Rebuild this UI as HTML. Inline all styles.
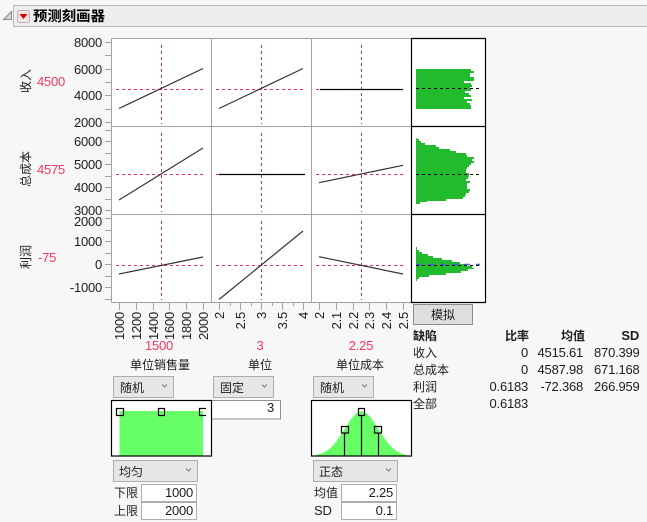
<!DOCTYPE html>
<html><head><meta charset="utf-8"><style>
html,body{margin:0;padding:0;background:#f7f7f7;width:647px;height:522px;overflow:hidden}
svg{display:block}
text{font-family:"Liberation Sans","Noto Sans CJK SC",sans-serif;font-size:13px;fill:#1c1c1c;letter-spacing:-.22px}
.c{font-size:12px;letter-spacing:0}
.r{fill:#f5375a}
.m{text-anchor:middle}
.e{text-anchor:end}
.b{font-weight:bold}
.sel{fill:#e6e6e6;stroke:#adadad;stroke-width:1}
.inp{fill:#fff;stroke:#adadad;stroke-width:1}
.red{stroke:#e0304f;stroke-width:1;stroke-dasharray:3 3;fill:none}
.lin{stroke:#333;stroke-width:1.2;fill:none}
.blk{stroke:#000;stroke-width:1.2;fill:none}
.dot{stroke:#000;stroke-width:1;stroke-dasharray:3 3;fill:none}
.chev{stroke:#777;stroke-width:1;fill:none}
.g{stroke:#a3a3a3;stroke-width:1;fill:none}
.hd{fill:none;stroke:#000;stroke-width:1.2}
</style></head><body>
<svg width="647" height="522" viewBox="0 0 647 522" xmlns="http://www.w3.org/2000/svg">
<rect width="647" height="522" fill="#f7f7f7"/>
<!-- header -->
<rect x="13.5" y="5.5" width="640" height="21" fill="#eeeeee" stroke="#b5b5b5"/>
<path d="M3.5 19.5 L11.5 11.5 V19.5 Z" fill="#d8d8d8" stroke="#8a8a8a"/>
<rect x="17.5" y="10.5" width="12" height="12" rx="2" fill="#f0e4e4" stroke="#c0b0b0"/>
<path d="M19.5 14 H27.5 L23.5 19 Z" fill="#d80000"/>
<text x="33" y="21" class="b" style="font-size:14.4px;letter-spacing:0;fill:#000">预测刻画器</text>

<!-- panels -->
<rect x="111.5" y="38.5" width="300" height="264" fill="#fff"/>
<rect x="411.5" y="38.5" width="74" height="264" fill="#fff"/>
<path class="g" d="M111.5 38.5 H411.5 M111.5 126.5 H411.5 M111.5 214.5 H411.5 M111.5 302.5 H411.5 M111.5 38.5 V302.5 M211.5 38.5 V302.5 M311.5 38.5 V302.5"/>

<!-- y ticks -->
<path class="g" d="M105 42.5H111M105 55.5H111M105 69.5H111M105 82.5H111M105 95.5H111M105 109.5H111M105 122.5H111
M105 130.5H111M105 141.5H111M105 153.5H111M105 164.5H111M105 176.5H111M105 187.5H111M105 199.5H111M105 210.5H111
M105 218.5H111M105 230.5H111M105 241.5H111M105 253.5H111M105 264.5H111M105 276.5H111M105 287.5H111M105 299.5H111"/>
<!-- x ticks -->
<path class="g" d="M119.5 302V310M136.5 302V310M153.5 302V310M169.5 302V310M186.5 302V310M203.5 302V310
M219.5 302V310M230.5 302V306M240.5 302V310M251.5 302V306M261.5 302V310M272.5 302V306M282.5 302V310M293.5 302V306M303.5 302V310
M319.5 302V310M336.5 302V310M353.5 302V310M369.5 302V310M386.5 302V310M403.5 302V310"/>

<!-- y labels -->
<g class="e">
<text x="102" y="47" class="e">8000</text><text x="102" y="74" class="e">6000</text><text x="102" y="100" class="e">4000</text><text x="102" y="127" class="e">2000</text>
<text x="102" y="146" class="e">6000</text><text x="102" y="169" class="e">5000</text><text x="102" y="192" class="e">4000</text><text x="102" y="215" class="e">3000</text>
<text x="102" y="226" class="e">2000</text><text x="102" y="246" class="e">1000</text><text x="102" y="269" class="e">0</text><text x="102" y="292" class="e">-1000</text>
</g>

<!-- side labels -->
<text class="c m" transform="translate(30,81) rotate(-90)">收入</text>
<text class="c m" transform="translate(30,169) rotate(-90)">总成本</text>
<text class="c m" transform="translate(30,257) rotate(-90)">利润</text>
<text x="37" y="86" class="r">4500</text>
<text x="37" y="174" class="r">4575</text>
<text x="38" y="262" class="r">-75</text>

<!-- crosshairs -->
<path class="red" d="M161.5 45V124M261.5 45V124M361.5 45V124M161.5 133V212M261.5 133V212M361.5 133V212M161.5 221V300M261.5 221V300M361.5 221V300"/>
<path class="red" d="M116 89.5H206M216 89.5H306M316 89.5H406M116 174.5H206M216 174.5H306M316 174.5H406M116 265.5H206M216 265.5H306M316 265.5H406"/>

<!-- profile lines -->
<path class="lin" d="M119 108.5L203 68.5M219 108.5L303 68.5M119 200L203 148M319 182.7L403 165.3M119 274L203 257M219 299.5L303 231M319 256.7L403 274"/>
<path class="blk" d="M320 89.5H403M219 174.5H305"/>

<!-- histograms -->
<g fill="#22bb2e" shape-rendering="crispEdges">
<path d="M416 69H471V71H474V73H470V77H474V81H464V83H471V85H472V87H470V89H471V91H465V93H469V95H471V97H464V99H472V101H467V103H470V105H471V109H416Z"/>
<path d="M416 138H417V139H419V141H421V143H425V145H436V147H439V149H450V151H456V153H466V155H467V157H474V159H472V161H474V163H471V165H469V167H467V169H466V173H469V177H468V179H466V181H470V183H467V189H470V191H469V193H466V195H465V197H463V199H446V201H427V202H420V204H416Z"/>
<path d="M416 247H417V250H419V252H422V254H428V256H433V258H442V260H452V262H460V264H465V266H472V268H474V269H468V271H461V273H446V275H429V277H419V279H417V281H416Z"/>
</g>
<path d="M416 264.5H480" stroke="#3a66d8" stroke-width="1.4" stroke-dasharray="6 6" fill="none"/>
<path class="dot" d="M416 88.5H479M416 174.5H479M416 265.5H479"/>
<path d="M411.5 38.5H485.5V302.5H411.5ZM411.5 126.5H485.5M411.5 214.5H485.5" fill="none" stroke="#000" stroke-width="1.2"/>

<!-- x labels -->
<text class="e" transform="translate(124,312) rotate(-90)">1000</text>
<text class="e" transform="translate(141,312) rotate(-90)">1200</text>
<text class="e" transform="translate(158,312) rotate(-90)">1400</text>
<text class="e" transform="translate(174,312) rotate(-90)">1600</text>
<text class="e" transform="translate(191,312) rotate(-90)">1800</text>
<text class="e" transform="translate(208,312) rotate(-90)">2000</text>
<text class="e" transform="translate(224,312) rotate(-90)">2</text>
<text class="e" transform="translate(245,312) rotate(-90)">2.5</text>
<text class="e" transform="translate(266,312) rotate(-90)">3</text>
<text class="e" transform="translate(287,312) rotate(-90)">3.5</text>
<text class="e" transform="translate(308,312) rotate(-90)">4</text>
<text class="e" transform="translate(324,312) rotate(-90)">2</text>
<text class="e" transform="translate(341,312) rotate(-90)">2.1</text>
<text class="e" transform="translate(358,312) rotate(-90)">2.2</text>
<text class="e" transform="translate(374,312) rotate(-90)">2.3</text>
<text class="e" transform="translate(391,312) rotate(-90)">2.4</text>
<text class="e" transform="translate(408,312) rotate(-90)">2.5</text>

<text x="159" y="350" class="r m">1500</text>
<text x="260" y="350" class="r m">3</text>
<text x="361" y="350" class="r m">2.25</text>
<text x="160" y="369" class="c m">单位销售量</text>
<text x="260" y="369" class="c m">单位</text>
<text x="360" y="369" class="c m">单位成本</text>

<!-- selects row 1 -->
<rect class="sel" x="113.5" y="376.5" width="60" height="21"/>
<rect class="sel" x="213.5" y="376.5" width="60" height="21"/>
<rect class="sel" x="313.5" y="376.5" width="60" height="21"/>
<text x="120" y="392" class="c">随机</text>
<text x="220" y="392" class="c">固定</text>
<text x="320" y="392" class="c">随机</text>
<path class="chev" d="M162 384.5l2.5 2.5 2.5-2.5M262 384.5l2.5 2.5 2.5-2.5M362 384.5l2.5 2.5 2.5-2.5"/>

<!-- fixed input -->
<path d="M212 400.5H280.5V419H212Z" fill="#fff"/>
<path d="M212 400.5H280.5V419H212" class="inp" style="fill:none;stroke:#909090"/>
<text x="274" y="412" class="e">3</text>

<!-- dist 1 -->
<rect x="111.5" y="400.5" width="100" height="56" fill="#fff"/>
<rect x="119.5" y="411" width="83.5" height="45" fill="#66ff66"/>
<rect x="111.5" y="400.5" width="100" height="55.5" fill="none" stroke="#000" stroke-width="1.2"/>
<rect class="hd" x="116.5" y="408.5" width="7" height="7"/>
<rect class="hd" x="158.5" y="408.5" width="6" height="7"/>
<path class="hd" d="M206 408.5H199.5V415.5H206"/>

<!-- dist 2 -->
<rect x="311.5" y="400.5" width="100" height="56" fill="#fff"/>
<path fill="#66ff66" d="M316.5 456L316.5 454.8 321.5 453.5 326.5 451 331.5 447 336.5 441.3 341.5 434 346.5 426 351.5 418.4 356.5 413 361.5 411 366.5 413 371.5 418.4 376.5 426 381.5 434 386.5 441.3 391.5 447 396.5 451 401.5 453.5 406.5 454.8 406.5 456Z"/>
<path d="M344.5 433V456M361.5 415V456M378.5 433V456" stroke="#000" stroke-width="1.2" fill="none"/>
<rect x="311.5" y="400.5" width="100" height="55.5" fill="none" stroke="#000" stroke-width="1.2"/>
<rect class="hd" x="341.5" y="426.5" width="7" height="6.5"/>
<rect class="hd" x="358.5" y="408.5" width="6" height="7"/>
<rect class="hd" x="374.5" y="426.5" width="7" height="6.5"/>

<!-- dist selects -->
<rect class="sel" x="113.5" y="460.5" width="84" height="21"/>
<rect class="sel" x="313.5" y="460.5" width="84" height="21"/>
<text x="119" y="476" class="c">均匀</text>
<text x="319" y="476" class="c">正态</text>
<path class="chev" d="M186 468.5l2.5 2.5 2.5-2.5M386 468.5l2.5 2.5 2.5-2.5"/>

<!-- params -->
<text x="114" y="497" class="c">下限</text>
<text x="114" y="515" class="c">上限</text>
<text x="314" y="497" class="c">均值</text>
<text x="314" y="515">SD</text>
<rect class="inp" x="141.5" y="484.5" width="55" height="17"/>
<rect class="inp" x="141.5" y="502.5" width="55" height="17"/>
<rect class="inp" x="341.5" y="484.5" width="55" height="17"/>
<rect class="inp" x="341.5" y="502.5" width="55" height="17"/>
<text x="193" y="497" class="e">1000</text>
<text x="193" y="515" class="e">2000</text>
<text x="393" y="497" class="e">2.25</text>
<text x="393" y="515" class="e">0.1</text>

<!-- button -->
<rect x="413.5" y="304.5" width="59" height="20" fill="#dedede" stroke="#8c8c8c"/>
<text x="443" y="319" class="c m">模拟</text>

<!-- table -->
<text x="413" y="340" class="c b">缺陷</text>
<text x="529" y="340" class="c b e">比率</text>
<text x="585" y="340" class="c b e">均值</text>
<text x="639" y="340" class="b e">SD</text>
<text x="413" y="357" class="c">收入</text>
<text x="413" y="374" class="c">总成本</text>
<text x="413" y="391" class="c">利润</text>
<text x="413" y="408" class="c">全部</text>
<text x="528" y="357" class="e">0</text><text x="583" y="357" class="e">4515.61</text><text x="639.5" y="357" class="e">870.399</text>
<text x="528" y="374" class="e">0</text><text x="583" y="374" class="e">4587.98</text><text x="639.5" y="374" class="e">671.168</text>
<text x="528" y="391" class="e">0.6183</text><text x="583" y="391" class="e">-72.368</text><text x="639.5" y="391" class="e">266.959</text>
<text x="528" y="408" class="e">0.6183</text>
</svg>
</body></html>
